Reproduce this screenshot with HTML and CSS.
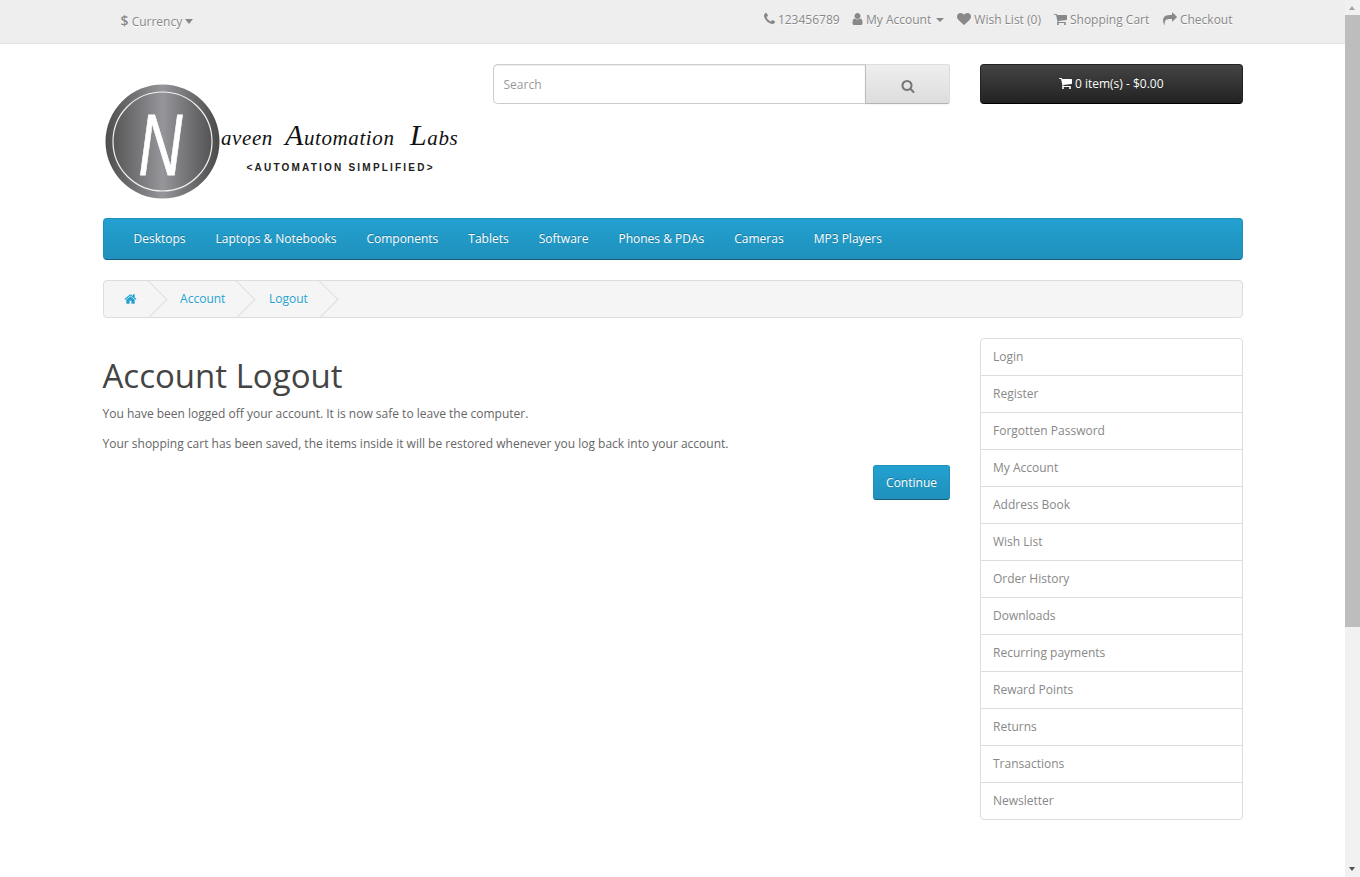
FILE: index.html

```html
<!DOCTYPE html>
<html lang="en">
<head>
    <meta charset="UTF-8">
    <meta name="viewport" content="width=device-width, initial-scale=1.0">
    <title>Account Logout</title>
    <link rel="stylesheet" href="styles.css">
</head>
<body>

<svg class="sprite" aria-hidden="true">
    <symbol id="i-phone" viewBox="192 0 1408 1792"><path d="M1600 1240q0 27-10 70.5t-21 68.5q-21 50-122 106-94 51-186 51-27 0-53-3.5t-57.5-12.5-47-14.5-55.5-20.5-49-18q-98-35-175-83-127-79-264-216t-216-264q-48-77-83-175-3-9-18-49t-20.5-55.5-14.5-47-12.5-57.5-3.5-53q0-92 51-186 56-101 106-122 25-11 68.5-21t70.5-10q14 0 21 3 18 6 53 76 11 19 30 54t35 63.5 31 53.5q3 4 17.5 25t21.5 35.5 7 28.5q0 20-28.5 50t-62 55-62 53-28.5 46q0 9 5 22.5t8.5 20.5 14 24 11.5 19q76 137 174 235t235 174q2 1 19 11.5t24 14 20.5 8.5 22.5 5q18 0 46-28.5t53-62 55-62 50-28.5q14 0 28.5 7t35.5 21.5 25 17.5q25 15 53.5 31t63.5 35 54 30q70 35 76 53 3 7 3 21z"/></symbol>
    <symbol id="i-user" viewBox="192 0 1408 1792"><path d="M1536 1399q0 109-62.5 187t-150.5 78h-854q-88 0-150.5-78t-62.5-187q0-85 8.5-160.5t31.5-152 58.5-131 94-89 134.5-34.5q131 128 313 128t313-128q76 0 134.5 34.5t94 89 58.5 131 31.5 152 8.5 160.5zm-256-887q0 159-112.5 271.5t-271.5 112.5-271.5-112.5-112.5-271.5 112.5-271.5 271.5-112.5 271.5 112.5 112.5 271.5z"/></symbol>
    <symbol id="i-heart" viewBox="0 0 1792 1792"><path d="M896 1664q-26 0-44-18l-624-602q-10-8-27.5-26t-55.5-65.5-68-97.5-53.5-121-23.5-138q0-220 127-344t351-124q62 0 126.5 21.5t120 58 95.5 68.5 76 68q36-36 76-68t95.5-68.5 120-58 126.5-21.5q224 0 351 124t127 344q0 221-229 450l-623 600q-18 18-44 18z"/></symbol>
    <symbol id="i-cart" viewBox="64 0 1664 1792"><path d="M704 1536q0 52-38 90t-90 38-90-38-38-90 38-90 90-38 90 38 38 90zm896 0q0 52-38 90t-90 38-90-38-38-90 38-90 90-38 90 38 38 90zm128-1088v512q0 24-16.5 42.5t-40.5 21.5l-1044 122q13 60 13 70 0 16-24 64h920q26 0 45 19t19 45-19 45-45 19h-1024q-26 0-45-19t-19-45q0-11 8-31.5t16-36 21.5-40 15.5-29.5l-177-823h-204q-26 0-45-19t-19-45 19-45 45-19h256q16 0 28.5 6.5t19.5 15.5 13 24.5 8 26 5.5 29.5 4.5 26h1201q26 0 45 19t19 45z"/></symbol>
    <symbol id="i-share" viewBox="0 0 1792 1792"><path d="M1792 640q0 26-19 45l-512 512q-19 19-45 19t-45-19-19-45v-256h-224q-98 0-175.5 6t-154 21.5-133 42.5-105.5 69.5-80 101-48.5 138.5-17.5 181q0 55 5 123 0 6 2.5 23.5t2.5 26.5q0 15-8.5 25t-23.5 10q-16 0-28-17-7-9-13-22t-13.5-30-10.5-24q-127-285-127-451 0-199 53-333 162-403 875-403h224v-256q0-26 19-45t45-19 45 19l512 512q19 19 19 45z"/></symbol>
    <symbol id="i-search" viewBox="0 0 1792 1792"><path d="M1216 832q0-185-131.5-316.5t-316.5-131.5-316.5 131.5-131.5 316.5 131.5 316.5 316.5 131.5 316.5-131.5 131.5-316.5zm512 832q0 52-38 90t-90 38q-54 0-90-38l-343-342q-179 124-399 124-143 0-273.5-55.5t-225-150-150-225-55.5-273.5 55.5-273.5 150-225 225-150 273.5-55.5 273.5 55.5 225 150 150 225 55.5 273.5q0 220-124 399l343 343q37 37 37 90z"/></symbol>
    <symbol id="i-home" viewBox="0 0 1792 1792"><path d="M1472 992v480q0 26-19 45t-45 19h-384v-384h-256v384h-384q-26 0-45-19t-19-45v-480q0-1 .5-3t.5-3l575-474 575 474q1 2 1 6zm223-69l-62 74q-8 9-21 11h-3q-13 0-21-7l-692-577-692 577q-12 8-24 7-13-2-21-11l-62-74q-8-10-7-23.5t11-21.5l719-599q32-26 76-26t76 26l244 204v-195q0-14 9-23t23-9h192q14 0 23 9t9 23v408l219 182q10 8 11 21.5t-7 23.5z"/></symbol>
</svg>

<nav class="top">
    <div class="container top-row">
        <a class="currency" href="#"><span class="dollar">$</span> Currency <span class="caret-big"></span></a>
        <ul class="top-links">
            <li><svg class="icon icon-narrow"><use href="#i-phone"/></svg>123456789</li>
            <li><a href="#"><svg class="icon icon-narrow"><use href="#i-user"/></svg>My Account <span class="caret"></span></a></li>
            <li><a href="#"><svg class="icon icon-wide"><use href="#i-heart"/></svg>Wish List (0)</a></li>
            <li><a href="#"><svg class="icon icon-cart"><use href="#i-cart"/></svg>Shopping Cart</a></li>
            <li><a href="#"><svg class="icon icon-wide"><use href="#i-share"/></svg>Checkout</a></li>
        </ul>
    </div>
</nav>

<header class="container header-row">
    <a class="logo" href="#">
        <svg viewBox="0 0 360 144" width="360" height="144" role="img" aria-label="Naveen Automation Labs">
            <defs>
                <linearGradient id="metal" x1="0" x2="1" y1="0" y2="0">
                    <stop offset="0" stop-color="#4e4e4e"/>
                    <stop offset="0.5" stop-color="#95959a"/>
                    <stop offset="1" stop-color="#4a4a4a"/>
                </linearGradient>
            </defs>
            <circle cx="59.5" cy="77.5" r="57" fill="url(#metal)"/>
            <circle cx="59.5" cy="77.5" r="49.5" fill="none" stroke="#f2f2f2" stroke-width="1.2"/>
            <text class="logo-n" x="35.5" y="111" textLength="44" lengthAdjust="spacingAndGlyphs">N</text>
            <text class="logo-name" y="81"><tspan x="118">aveen</tspan> <tspan class="logo-cap" x="182">A</tspan>utomation <tspan class="logo-cap" x="307">L</tspan>abs</text>
            <text class="logo-tag" x="143.5" y="107" textLength="186">&lt;AUTOMATION SIMPLIFIED&gt;</text>
        </svg>
    </a>
    <form class="search">
        <input type="text" placeholder="Search">
        <button type="button"><svg class="icon-search"><use href="#i-search"/></svg></button>
    </form>
    <button type="button" class="cart-btn"><svg class="icon icon-cart"><use href="#i-cart"/></svg>0 item(s) - $0.00</button>
</header>

<div class="container">
    <nav class="menu">
        <a href="#">Desktops</a>
        <a href="#">Laptops &amp; Notebooks</a>
        <a href="#">Components</a>
        <a href="#">Tablets</a>
        <a href="#">Software</a>
        <a href="#">Phones &amp; PDAs</a>
        <a href="#">Cameras</a>
        <a href="#">MP3 Players</a>
    </nav>

    <ul class="breadcrumb">
        <li><a href="#"><svg class="icon-home"><use href="#i-home"/></svg></a></li>
        <li><a href="#">Account</a></li>
        <li><a href="#">Logout</a></li>
    </ul>

    <div class="main-row">
        <main class="content">
            <h1>Account Logout</h1>
            <p>You have been logged off your account. It is now safe to leave the computer.</p>
            <p>Your shopping cart has been saved, the items inside it will be restored whenever you log back into your account.</p>
            <div class="buttons">
                <a class="btn-primary" href="#">Continue</a>
            </div>
        </main>
        <aside class="list-group">
            <a href="#">Login</a>
            <a href="#">Register</a>
            <a href="#">Forgotten Password</a>
            <a href="#">My Account</a>
            <a href="#">Address Book</a>
            <a href="#">Wish List</a>
            <a href="#">Order History</a>
            <a href="#">Downloads</a>
            <a href="#">Recurring payments</a>
            <a href="#">Reward Points</a>
            <a href="#">Returns</a>
            <a href="#">Transactions</a>
            <a href="#">Newsletter</a>
        </aside>
    </div>
</div>

<div class="scrollbar" aria-hidden="true">
    <span class="arrow-up"></span>
    <span class="thumb"></span>
    <span class="arrow-down"></span>
</div>

</body>
</html>
```

FILE: styles.css

```css
* {
    box-sizing: border-box;
}

body {
    font-family: 'Open Sans', sans-serif;
    font-size: 12px;
    line-height: 20px;
    margin: 0;
    padding-right: 15px;
    color: #666;
    background-color: #fff;
}

a {
    color: inherit;
    text-decoration: none;
}

ul {
    list-style: none;
    margin: 0;
    padding: 0;
}

.sprite {
    display: none;
}

.container {
    width: 1170px;
    margin: 0 auto;
    padding: 0 15px;
}

.icon {
    display: inline-block;
    height: 14px;
    margin-right: 3px;
    fill: currentColor;
    vertical-align: -2px;
}

.icon-narrow {
    width: 11px;
}

.icon-cart {
    width: 13px;
}

.icon-wide {
    width: 14px;
}

/* top bar */
.top {
    height: 44px;
    padding: 8px 0 3px;
    background-color: #eee;
    border-bottom: 1px solid #e2e2e2;
    margin-bottom: 20px;
    color: #888;
    text-shadow: 0 1px 0 #fff;
}

.top-row {
    display: flex;
    justify-content: space-between;
}

.currency {
    padding: 3px 0 0 18px;
}

.dollar {
    font-size: 14px;
    font-weight: 600;
}

.caret-big {
    display: inline-block;
    border-top: 5px solid #888;
    border-left: 4.5px solid transparent;
    border-right: 4.5px solid transparent;
    vertical-align: 2px;
}

.caret {
    display: inline-block;
    border-top: 4px solid #888;
    border-left: 4px solid transparent;
    border-right: 4px solid transparent;
    vertical-align: 2px;
    margin-left: 2px;
}

.top-links {
    display: flex;
    gap: 13px;
    padding: 2px 10px 0 0;
}

.top-links li:first-child {
    margin-right: -0.7px;
}

.top-links li:last-child {
    margin-left: 0.7px;
}

/* logo, search and cart */
.header-row {
    display: grid;
    grid-template-columns: 360px 457.5px 262.5px;
    column-gap: 30px;
    align-items: start;
    margin-bottom: 10px;
}

.logo {
    display: block;
    height: 144px;
}

.logo svg {
    display: block;
    overflow: visible;
}

.logo-n {
    font-family: 'Liberation Sans', sans-serif;
    font-style: italic;
    font-size: 88px;
    fill: #fff;
    stroke: #fff;
    stroke-width: 0.8px;
}

.logo-name {
    font-family: 'Liberation Serif', serif;
    font-style: italic;
    font-size: 21px;
    letter-spacing: 0.6px;
    fill: #111;
}

.logo-cap {
    font-size: 30px;
}

.logo-tag {
    font-family: 'Liberation Sans', sans-serif;
    font-weight: 700;
    font-size: 10px;
    fill: #222;
}

.search {
    display: flex;
    height: 40px;
    margin: 0;
}

.search input {
    flex: 1;
    min-width: 0;
    height: 40px;
    padding: 10px;
    font-family: inherit;
    font-size: 12px;
    color: #555;
    border: 1px solid #ccc;
    border-right: none;
    border-radius: 5px 0 0 5px;
    box-shadow: inset 0 1px 1px rgba(0, 0, 0, 0.075);
    outline: none;
}

.search input::placeholder {
    color: #999;
}

.search button {
    width: 85px;
    height: 40px;
    padding: 2px 0 0;
    background-image: linear-gradient(to bottom, #eee, #ddd);
    border: 1px solid #ddd;
    border-left-color: #bbb;
    border-bottom-color: #b3b3b3;
    border-radius: 0 3px 3px 0;
    box-shadow: 0 1px 2px rgba(0, 0, 0, 0.05);
    color: #777;
}

.icon-search {
    width: 14px;
    height: 14px;
    fill: currentColor;
    vertical-align: middle;
}

.cart-btn {
    height: 40px;
    padding: 0 0 2px;
    font-family: inherit;
    font-size: 12px;
    color: #fff;
    background-image: linear-gradient(to bottom, #444, #222);
    border: 1px solid #222;
    border-bottom-color: #000;
    border-radius: 4px;
    text-shadow: 0 -1px 0 rgba(0, 0, 0, 0.25);
}

/* main menu */
.menu {
    display: flex;
    height: 42px;
    padding: 0 15px;
    margin-bottom: 20px;
    background-image: linear-gradient(to bottom, #23a1d1, #1f90bb);
    border: 1px solid #1f90bb;
    border-bottom-color: #145e7a;
    border-radius: 4px;
}

.menu a {
    padding: 10px 15px;
    color: #fff;
    text-shadow: 0 -1px 0 rgba(0, 0, 0, 0.25);
}

/* breadcrumb */
.breadcrumb {
    display: flex;
    gap: 3.6px;
    height: 38px;
    padding: 8px 0;
    margin-bottom: 20px;
    background-color: #f5f5f5;
    border: 1px solid #ddd;
    border-radius: 4px;
    overflow: hidden;
    color: #23a1d1;
}

.breadcrumb li {
    position: relative;
    padding: 0 20px;
    text-shadow: 0 1px 0 #fff;
    white-space: nowrap;
}

.breadcrumb li::after {
    content: '';
    position: absolute;
    top: -3px;
    right: -5px;
    width: 26px;
    height: 26px;
    border-right: 1px solid #ddd;
    border-bottom: 1px solid #ddd;
    transform: rotate(-45deg);
}

.icon-home {
    display: block;
    width: 13px;
    height: 20px;
    fill: currentColor;
}

/* content and sidebar */
.main-row {
    display: grid;
    grid-template-columns: 847.5px 262.5px;
    column-gap: 30px;
    align-items: start;
}

h1 {
    font-size: 33px;
    font-weight: 400;
    line-height: 36.3px;
    color: #444;
    margin: 20px 0 10px;
}

p {
    margin: 0 0 10px;
}

.buttons {
    display: flex;
    justify-content: flex-end;
    margin-top: 11px;
}

.btn-primary {
    padding: 7.5px 12px 8.5px;
    line-height: 17px;
    color: #fff;
    background-image: linear-gradient(to bottom, #23a1d1, #1f90bb);
    border: 1px solid #1f90bb;
    border-bottom-color: #145e7a;
    border-radius: 3px;
    text-shadow: 0 -1px 0 rgba(0, 0, 0, 0.25);
}

.list-group {
    display: flex;
    flex-direction: column;
    border: 1px solid #ddd;
    border-radius: 4px;
    margin-bottom: 20px;
}

.list-group a {
    height: 37px;
    padding: 8px 12px;
    color: #888;
    border-bottom: 1px solid #ddd;
    text-shadow: 0 1px 0 #fff;
}

.list-group a:last-child {
    height: 36px;
    border-bottom: none;
}

/* browser scrollbar as it shows in the window */
.scrollbar {
    position: fixed;
    top: 0;
    right: 0;
    bottom: 0;
    width: 15px;
    background-color: #f1f1f1;
}

.thumb {
    position: absolute;
    top: 15px;
    left: 0;
    width: 15px;
    height: 612px;
    background-color: #bdbdbd;
}

.arrow-up,
.arrow-down {
    position: absolute;
    left: 4px;
    border-left: 3.5px solid transparent;
    border-right: 3.5px solid transparent;
}

.arrow-up {
    top: 6px;
    border-bottom: 4px solid #a3a3a3;
}

.arrow-down {
    bottom: 6px;
    border-top: 4px solid #505050;
}
```
